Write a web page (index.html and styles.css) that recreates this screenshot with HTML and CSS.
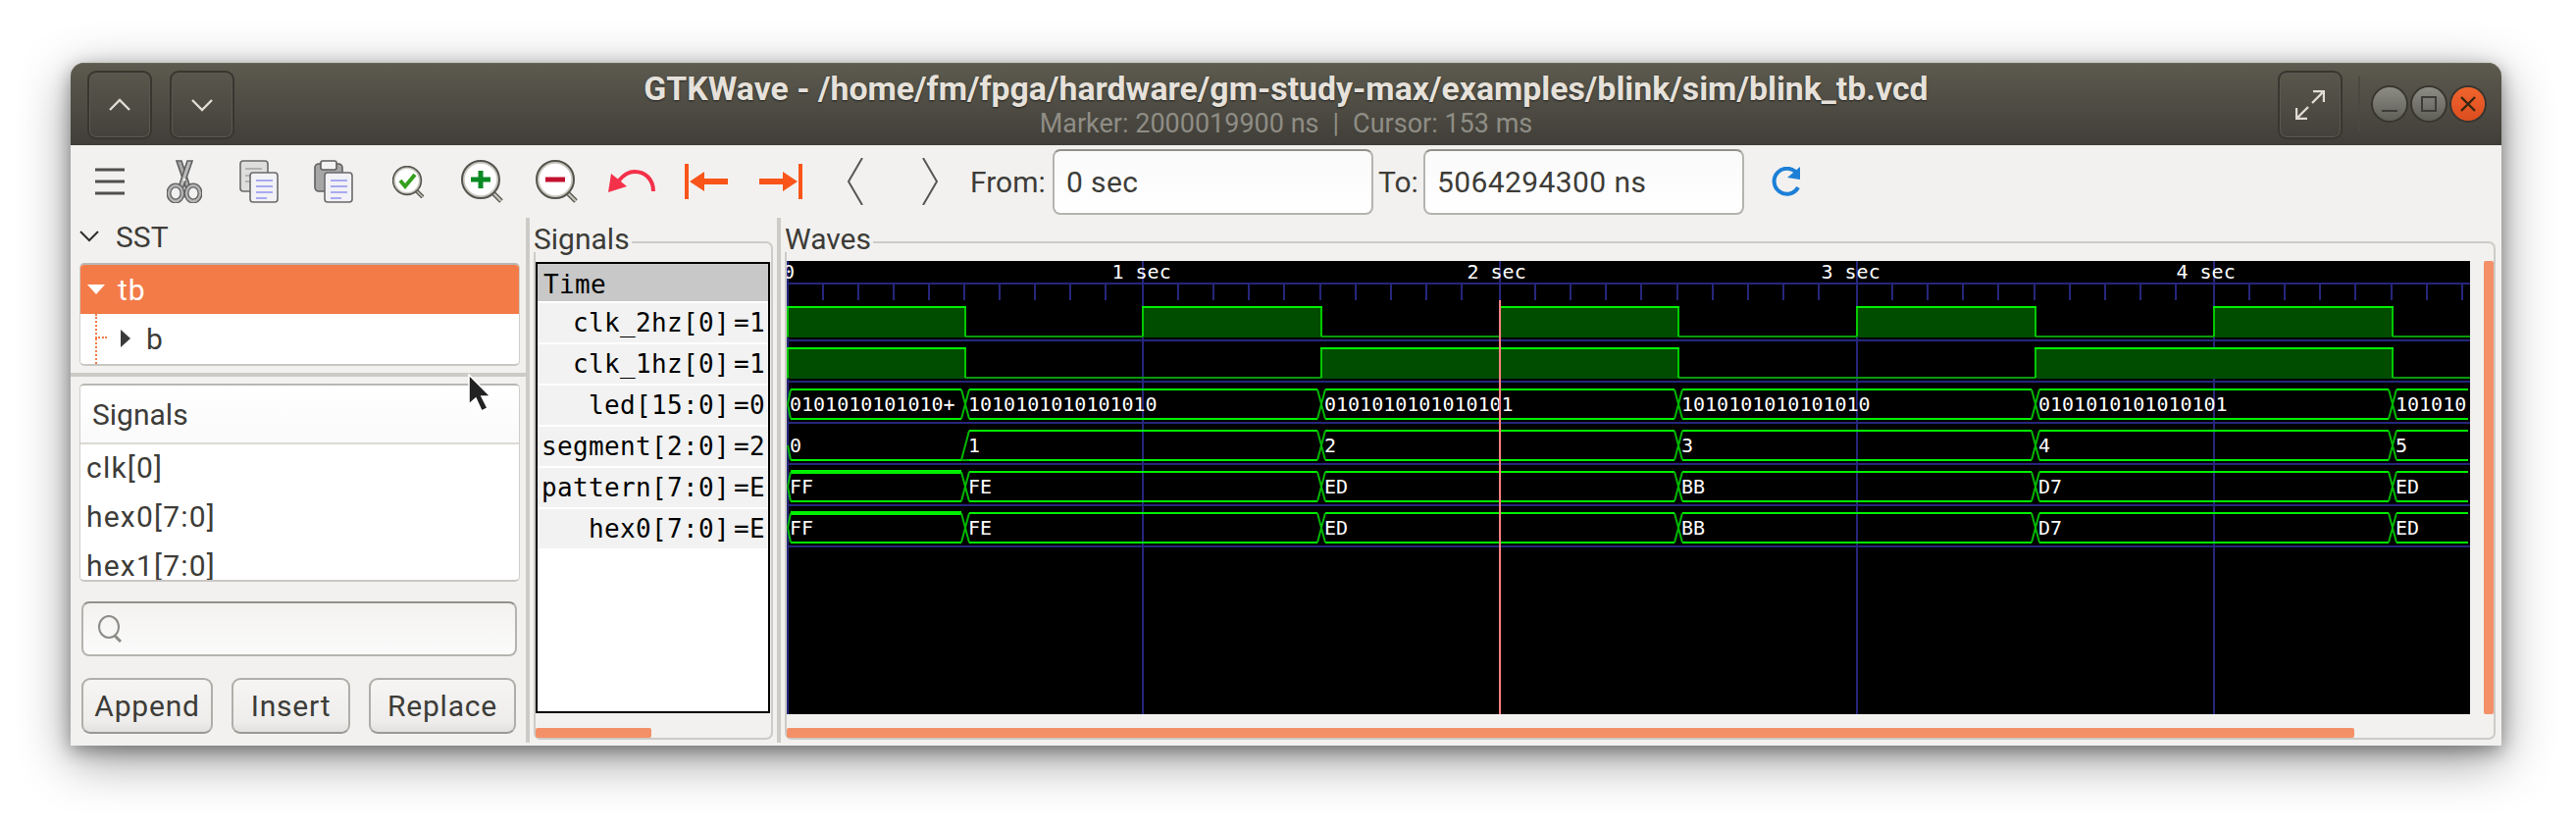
FILE: index.html
```html
<!DOCTYPE html>
<html lang="en">
<head>
  <meta charset="UTF-8" />
  <title>GTKWave</title>
  <link rel="stylesheet" href="styles.css">
</head>
<body>

  <div class="window">
    <header class="titlebar">
      <div class="title-left">
        <div class="hb-btn"><svg width="22" height="14" viewBox="0 0 22 14"><path d="M1 12 11 2 21 12"/></svg></div>
        <div class="hb-btn"><svg width="22" height="14" viewBox="0 0 22 14"><path d="M1 2 11 12 21 2"/></svg></div>
      </div>
      <div class="title-text">
        <div class="title-main">GTKWave - /home/fm/fpga/hardware/gm-study-max/examples/blink/sim/blink_tb.vcd</div>
        <div class="title-sub">Marker: 2000019900 ns<span class="sub-bar">|</span>Cursor: 153 ms</div>
      </div>
      <div class="title-right">
        <div class="hb-btn"><svg width="30" height="30" viewBox="0 0 30 30"><path d="M18 1H29V12M29 1 17 13M1 18V29H12M1 29 13 17"/></svg></div>
        <div class="hb-sep"></div>
        <div class="win-btn"><span class="win-min"></span></div>
        <div class="win-btn"><span class="win-max"></span></div>
        <div class="win-btn win-close"><svg width="18" height="18" viewBox="0 0 18 18"><path d="M2 2 16 16M16 2 2 16"/></svg></div>
      </div>
    </header>

    <div class="toolbar">
      <div class="tool"><svg width="30" height="28" viewBox="0 0 30 28"><path d="M0 2H30M0 14H30M0 26H30" fill="none" stroke="#4f4f4f" stroke-width="3"/></svg></div>
      <div class="tool">
        <svg width="36" height="44" viewBox="0 0 36 44">
          <path d="M10 1 15 1 24 28 20 30Z" fill="#a9a9a9" stroke="#5f5f5f" stroke-width="1.6"/>
          <path d="M26 1 21 1 12 28 16 30Z" fill="#bdbdbd" stroke="#5f5f5f" stroke-width="1.6"/>
          <ellipse cx="9" cy="34" rx="7" ry="8" fill="none" stroke="#5f5f5f" stroke-width="5"/>
          <ellipse cx="27" cy="34" rx="7" ry="8" fill="none" stroke="#5f5f5f" stroke-width="5"/>
          <ellipse cx="9" cy="34" rx="7" ry="8" fill="none" stroke="#b5b5b5" stroke-width="2.4"/>
          <ellipse cx="27" cy="34" rx="7" ry="8" fill="none" stroke="#b5b5b5" stroke-width="2.4"/>
          <circle cx="18" cy="20" r="1.6" fill="#eee"/>
        </svg>
      </div>
      <div class="tool">
        <svg width="40" height="44" viewBox="0 0 40 44">
          <rect x="1" y="1" width="28" height="31" rx="3" fill="#dededc" stroke="#6a6a6a" stroke-width="1.6"/>
          <path d="M6 9H23M6 16H12M6 22H12" stroke="#b2b2b0" stroke-width="2"/>
          <rect x="11" y="13" width="28" height="30" rx="3" fill="#f1f1f6" stroke="#6a6a6a" stroke-width="1.6"/>
          <path d="M17 21H34M17 27H34M17 33H34M17 39H28" stroke="#a9a9f0" stroke-width="2"/>
        </svg>
      </div>
      <div class="tool">
        <svg width="40" height="44" viewBox="0 0 40 44">
          <rect x="1" y="4" width="28" height="28" rx="4" fill="#a6a6a6" stroke="#5f5f5f" stroke-width="1.6"/>
          <rect x="7" y="1" width="16" height="9" rx="2" fill="#f3f3f3" stroke="#5f5f5f" stroke-width="1.6"/>
          <rect x="11" y="13" width="28" height="30" rx="3" fill="#f1f1f6" stroke="#6a6a6a" stroke-width="1.6"/>
          <path d="M17 21H34M17 27H34M17 33H34M17 39H28" stroke="#a9a9f0" stroke-width="2"/>
        </svg>
      </div>
      <div class="tool">
        <svg width="33" height="33" viewBox="0 0 33 33">
          <path d="M23 24 31 32" stroke="#55554f" stroke-width="4"/>
          <path d="M23 24 31 32" stroke="#c4c2b8" stroke-width="1.6"/>
          <circle cx="15" cy="15" r="13.5" fill="#fff" stroke="#c9c7be" stroke-width="3"/>
          <circle cx="15" cy="15" r="14.4" fill="none" stroke="#55554f" stroke-width="1.6"/>
          <path d="M8 15 13 21 23 9" fill="none" stroke="#35a01e" stroke-width="4"/>
        </svg>
      </div>
      <div class="tool">
        <svg width="44" height="44" viewBox="0 0 44 44">
          <path d="M31 32 41 42" stroke="#55554f" stroke-width="5"/>
          <path d="M31 32 41 42" stroke="#c4c2b8" stroke-width="2.4"/>
          <circle cx="20" cy="20" r="18" fill="#fff" stroke="#c9c7be" stroke-width="3.4"/>
          <circle cx="20" cy="20" r="19" fill="none" stroke="#55554f" stroke-width="2"/>
          <path d="M20 11V29M10 20H30" stroke="#098a24" stroke-width="5"/>
        </svg>
      </div>
      <div class="tool">
        <svg width="44" height="44" viewBox="0 0 44 44">
          <path d="M31 32 41 42" stroke="#55554f" stroke-width="5"/>
          <path d="M31 32 41 42" stroke="#c4c2b8" stroke-width="2.4"/>
          <circle cx="20" cy="20" r="18" fill="#fff" stroke="#c9c7be" stroke-width="3.4"/>
          <circle cx="20" cy="20" r="19" fill="none" stroke="#55554f" stroke-width="2"/>
          <path d="M10 20H30" stroke="#c2112f" stroke-width="5"/>
        </svg>
      </div>
      <div class="tool">
        <svg width="48" height="24" viewBox="0 0 48 24">
          <path d="M46 22C46 10 38 2 27 2 20 2 15 6 11 11" fill="none" stroke="#f5304a" stroke-width="4"/>
          <path d="M0 23 3 4 19 17Z" fill="#f5304a"/>
        </svg>
      </div>
      <div class="tool">
        <svg width="44" height="36" viewBox="0 0 44 36">
          <path d="M2 0V36" stroke="#f9541a" stroke-width="4"/>
          <path d="M5 18 20 8V15H44V21H20V28Z" fill="#f9541a"/>
        </svg>
      </div>
      <div class="tool">
        <svg width="44" height="36" viewBox="0 0 44 36">
          <path d="M42 0V36" stroke="#f9541a" stroke-width="4"/>
          <path d="M39 18 24 8V15H0V21H24V28Z" fill="#f9541a"/>
        </svg>
      </div>
      <div class="tool"><svg width="18" height="48" viewBox="0 0 18 48"><path d="M16 0 2 24 16 48" fill="none" stroke="#565654" stroke-width="2"/></svg></div>
      <div class="tool"><svg width="18" height="48" viewBox="0 0 18 48"><path d="M2 0 16 24 2 48" fill="none" stroke="#565654" stroke-width="2"/></svg></div>
      <span class="tb-label tb-from">From:</span>
      <div class="entry entry-time">0 sec</div>
      <span class="tb-label tb-to">To:</span>
      <div class="entry entry-time">5064294300 ns</div>
      <div class="tool tool-reload">
        <svg width="32" height="30" viewBox="0 0 32 30">
          <path d="M28 7A13 13 0 1 0 29 21" fill="none" stroke="#1d7fd6" stroke-width="4"/>
          <path d="M31 0 31 13 18 11Z" fill="#1d7fd6"/>
        </svg>
      </div>
    </div>

    <div class="main">
      <aside class="left-pane">
        <section class="sst">
          <div class="expander">
            <svg width="20" height="12" viewBox="0 0 20 12"><path d="M1 1 10 10 19 1" fill="none" stroke="#2e2e2e" stroke-width="2"/></svg>
            <span>SST</span>
          </div>
          <div class="list-frame tree">
            <div class="tree-row tree-selected">
              <i class="arrow-down"></i><span>tb</span>
            </div>
            <div class="tree-row tree-child">
              <i class="tree-dots"></i><i class="arrow-right"></i><span>b</span>
            </div>
          </div>
        </section>
        <div class="handle-h"></div>
        <section class="sig-search">
          <div class="list-frame sig-list">
            <div class="sig-head">Signals</div>
            <div class="sig-item">clk[0]</div>
            <div class="sig-item">hex0[7:0]</div>
            <div class="sig-item">hex1[7:0]</div>
          </div>
          <div class="search">
            <svg width="28" height="28" viewBox="0 0 28 28"><ellipse cx="12" cy="12" rx="10" ry="11" fill="none" stroke="#8c8c88" stroke-width="2"/><path d="M18 21 24 27" stroke="#8c8c88" stroke-width="3"/></svg>
          </div>
          <div class="actions">
            <button class="btn btn-append">Append</button>
            <button class="btn btn-insert">Insert</button>
            <button class="btn btn-replace">Replace</button>
          </div>
        </section>
      </aside>

      <div class="handle-v"></div>

      <section class="signals-pane">
        <div class="frame">
          <div class="frame-label">Signals</div>
          <div class="name-box">
            <div class="name-time">Time</div>
            <div class="name-row"><span>clk_2hz[0]</span><b>=1</b></div>
            <div class="name-row"><span>clk_1hz[0]</span><b>=1</b></div>
            <div class="name-row"><span>led[15:0]</span><b>=0</b></div>
            <div class="name-row"><span>segment[2:0]</span><b>=2</b></div>
            <div class="name-row"><span>pattern[7:0]</span><b>=E</b></div>
            <div class="name-row"><span>hex0[7:0]</span><b>=E</b></div>
          </div>
          <div class="scroll-h scroll-names"></div>
        </div>
      </section>

      <div class="handle-v"></div>

      <section class="waves-pane">
        <div class="frame frame-waves">
          <div class="frame-label">Waves</div>
          <svg id="waves" class="wave-canvas" viewBox="802 266 1716 462" width="1716" height="462"></svg>
          <div class="scroll-v"></div>
          <div class="scroll-h scroll-waves"></div>
        </div>
      </section>
    </div>

    <svg class="pointer" width="26" height="40" viewBox="0 0 26 40">
      <path d="M2 1V31L9 25 15 38 21 35 15 23H24Z" fill="#222" stroke="#fff" stroke-width="1.6"/>
    </svg>
  </div>

  <script src="script.js"></script>
</body>
</html>
```

FILE: styles.css
```css
* {
  box-sizing: border-box;
}

body {
  margin: 0;
  width: 2626px;
  height: 844px;
  background: #fff;
  overflow: hidden;
  font-family: Roboto, "Noto Sans", sans-serif;
  color: #3d3c38;
}

.window {
  position: absolute;
  left: 72px;
  top: 64px;
  width: 2478px;
  height: 696px;
  background: #f2f1ef;
  border-radius: 14px 14px 0 0;
  box-shadow: 0 14px 52px rgba(0, 0, 0, .42), 0 5px 18px rgba(0, 0, 0, .34);
  display: flex;
  flex-direction: column;
}

/* title bar */
.titlebar {
  height: 84px;
  flex: none;
  display: grid;
  grid-template-columns: 1fr auto 1fr;
  align-items: center;
  border-radius: 14px 14px 0 0;
  background: linear-gradient(#5d5b4f, #403e38);
  box-shadow: inset 0 1px 0 #6a6859;
}

.title-left {
  display: flex;
  gap: 18px;
  padding-left: 17px;
}

.title-right {
  display: flex;
  align-items: center;
  justify-content: flex-end;
  padding-right: 14px;
}

.hb-btn {
  width: 66px;
  height: 70px;
  margin-top: 2px;
  border: 2px solid #38362f;
  border-radius: 9px;
  box-shadow: inset 0 0 0 1px #5a584f;
  display: flex;
  align-items: center;
  justify-content: center;
}

.hb-btn path {
  fill: none;
  stroke: #e0dcd4;
  stroke-width: 2.4;
}

.hb-sep {
  width: 2px;
  height: 56px;
  margin: 0 10px 0 16px;
  background: #4a4840;
}

.win-btn {
  width: 34px;
  height: 34px;
  margin: 0 3px;
  border-radius: 50%;
  background: linear-gradient(#8c8b84, #5f5e57);
  box-shadow: 0 0 0 2px #38362f;
  display: flex;
  align-items: center;
  justify-content: center;
}

.win-close {
  background: linear-gradient(#f0642c, #dd4d1f);
}

.win-close path {
  fill: none;
  stroke: #33260f;
  stroke-width: 2.4;
}

.win-min {
  width: 16px;
  height: 2px;
  margin-top: 14px;
  background: #3d3c36;
}

.win-max {
  width: 16px;
  height: 16px;
  border: 2px solid #3d3c36;
}

.title-text {
  text-align: center;
  white-space: nowrap;
}

.title-main {
  font-size: 33.8px;
  line-height: 38px;
  font-weight: 700;
  color: #e6e1da;
  text-shadow: 0 1px 2px #222;
}

.title-sub {
  font-size: 27px;
  line-height: 30px;
  margin-top: 1px;
  color: #8f8d85;
}

.sub-bar {
  margin: 0 14px;
}

/* toolbar */
.toolbar {
  height: 74px;
  flex: none;
  padding-left: 2px;
  display: flex;
  align-items: center;
}

.tool {
  width: 76px;
  flex: none;
  display: flex;
  justify-content: center;
  align-items: center;
}

.tb-label {
  font-size: 30px;
}

.tb-from {
  margin-left: 3px;
  width: 84px;
}

.tb-to {
  width: 46px;
  margin-left: 5px;
}

.entry {
  height: 67px;
  padding: 0 12px;
  border: 2px solid #b5b3af;
  border-top-color: #93918d;
  border-radius: 8px;
  background: linear-gradient(#fafafa, #fff);
  font-size: 30px;
  letter-spacing: .4px;
  display: flex;
  align-items: center;
}

.entry-time {
  width: 327px;
}

.tool-reload {
  margin-left: 4px;
}

/* panes */
.main {
  flex: 1;
  display: flex;
  min-height: 0;
}

.left-pane {
  width: 464px;
  flex: none;
  display: flex;
  flex-direction: column;
}

.sst {
  height: 158px;
  padding: 0 6px 0 9px;
}

.expander {
  height: 38px;
  margin-bottom: 8px;
  display: flex;
  align-items: center;
  gap: 17px;
  font-size: 30px;
}

.list-frame {
  background: #fff;
  border: 1px solid #cfcdc9;
  border-top: 2px solid #b9b7b3;
  border-bottom: 2px solid #c9c7c3;
  border-radius: 5px;
  overflow: hidden;
}

.tree {
  height: 105px;
}

.tree-row {
  height: 50px;
  display: flex;
  align-items: center;
  font-size: 30px;
  position: relative;
}

.tree-selected {
  background: #f37b48;
  color: #fff;
  padding-left: 7px;
}

.tree-selected span {
  margin-left: 13px;
  letter-spacing: 1px;
}

.arrow-down {
  border: 9px solid transparent;
  border-top: 10px solid #fff;
  border-bottom: 0;
}

.tree-child {
  padding-left: 41px;
  padding-bottom: 3px;
  height: 53px;
}

.tree-child span {
  margin-left: 16px;
}

.arrow-right {
  border: 9px solid transparent;
  border-left: 10px solid #3a3a3a;
  border-right: 0;
}

.tree-dots {
  position: absolute;
  left: 15px;
  top: 0;
  width: 12px;
  height: 25px;
  border-left: 2px dotted #f37b48;
  border-bottom: 2px dotted #f37b48;
}

.tree-dots::after {
  content: "";
  position: absolute;
  left: -2px;
  top: 25px;
  height: 26px;
  border-left: 2px dotted #f37b48;
}

.handle-h {
  height: 4px;
  flex: none;
  background: #cdcbc7;
}

.sig-search {
  flex: 1;
  padding: 7px 6px 0 9px;
}

.sig-list {
  height: 202px;
}

.sig-head {
  height: 60px;
  padding-left: 12px;
  display: flex;
  align-items: center;
  font-size: 30px;
  background: linear-gradient(#fff, #fafafa);
  border-bottom: 2px solid #dbd9d5;
}

.sig-item {
  height: 50px;
  padding: 0 0 3px 6px;
  display: flex;
  align-items: center;
  font-size: 30px;
  letter-spacing: 1.2px;
}

.search {
  height: 56px;
  margin: 20px 3px 0 2px;
  padding-left: 14px;
  border: 2px solid #b5b3af;
  border-top-color: #93918d;
  border-radius: 8px;
  background: linear-gradient(#f3f2f0, #fbfbfb);
  display: flex;
  align-items: center;
}

.actions {
  display: flex;
  gap: 19px;
  margin: 22px 3px 0 2px;
}

.btn {
  height: 57px;
  padding: 0;
  font: inherit;
  font-size: 30px;
  letter-spacing: .8px;
  color: #3d3c38;
  border: 2px solid #b0aeaa;
  border-bottom-color: #9a9894;
  border-radius: 9px;
  background: linear-gradient(#f6f5f3, #eeedeb 80%, #e2e1df);
}

.btn-append {
  width: 134px;
}

.btn-insert {
  width: 121px;
}

.btn-replace {
  width: 150px;
}

.handle-v {
  width: 4px;
  flex: none;
  margin-bottom: 3px;
  background: #cdcbc7;
}

.signals-pane {
  width: 252px;
  flex: none;
  padding: 24px 4px 6px;
}

.waves-pane {
  flex: 1;
  min-width: 0;
  padding: 24px 6px 6px 4px;
}

.frame {
  position: relative;
  height: 100%;
  padding-top: 19px;
  border: 2px solid #cdcbc7;
  border-radius: 7px;
}

.frame-label {
  position: absolute;
  left: -2px;
  top: -18px;
  height: 27px;
  padding-right: 2px;
  font-size: 30px;
  line-height: 28px;
  background: #f2f1ef;
}

.name-box {
  width: 239px;
  height: 460px;
  border: 2px solid #000;
  background: #fff;
  font-family: "DejaVu Sans Mono", monospace;
  font-size: 26px;
  letter-spacing: .35px;
  color: #000;
  overflow: hidden;
}

.name-time {
  height: 38px;
  padding-left: 6px;
  line-height: 43px;
  background: #c8c8c8;
}

.name-row {
  height: 40px;
  margin-top: 2px;
  display: flex;
  align-items: center;
  white-space: nowrap;
  background: #f2f2f2;
}

.name-row span {
  flex: 1;
  text-align: right;
  padding-right: 4px;
}

.name-row b {
  width: 35px;
  flex: none;
  font-weight: 400;
  overflow: hidden;
}

.scroll-h {
  height: 10px;
  margin-top: 15px;
  background: #f49068;
  border-radius: 2px;
}

.scroll-names {
  width: 118px;
}

.frame-waves {
  display: grid;
  grid-template-columns: 1716px 10px;
  grid-template-rows: 462px 10px;
  column-gap: 14px;
  row-gap: 14px;
  padding-top: 18px;
}

.wave-canvas {
  display: block;
  background: #000;
}

.scroll-v {
  background: #f49068;
  border-radius: 2px;
}

.scroll-waves {
  width: 1598px;
  margin-top: 0;
}

.wave-text {
  fill: #fff;
  font-family: "DejaVu Sans Mono", monospace;
  font-size: 20px;
}

.pointer {
  position: absolute;
  left: 404px;
  top: 317px;
}
```

FILE: script.js
```js
const svg = document.getElementById("waves");

const NAVY = "#26267c";
const TOP = 802, END = 2518;
const edges = [803, 984, 1165, 1347, 1529, 1711, 1893, 2075, 2257, 2439];
const majors = [803, 1165, 1529, 1893, 2257];

let out = '<defs><clipPath id="busclip"><rect x="802" y="266" width="1714" height="462"/></clipPath></defs>';

function line(d, color, w) {
  return `<path d="${d}" fill="none" stroke="${color}" stroke-width="${w}"/>`;
}

function text(x, y, s) {
  return `<text class="wave-text" x="${x}" y="${y}">${s}</text>`;
}

// time ruler
out += line(`M${TOP} 289H${END}`, NAVY, 2);
let ticks = "";
edges.forEach((e, k) => {
  const base = k % 2 ? e - 1 : e;
  for (let j = 0; j < 5; j++) {
    ticks += `M${base + 36 * j} 290V306`;
  }
});
out += line(ticks, NAVY, 2);
out += line(majors.map(x => `M${x} 266V728`).join(""), NAVY, 2);
out += text(798, 284, "0");
[[1133.5, 1], [1495.5, 2], [1856.5, 3], [2218.5, 4]].forEach(([x, n]) => {
  out += text(x, 284, n + " sec");
});

// row separators
[347, 389, 431, 473, 515, 557].forEach(y => {
  out += line(`M${TOP} ${y}H${END}`, NAVY, 2);
});

// clock rows: list of [from, to] where the signal is high
function clock(hi, lo, highs) {
  let low = `M${TOP} ${lo}H${END}`;
  out += line(low, "#0a9a0a", 2);
  highs.forEach(([a, b]) => {
    out += `<rect x="${a}" y="${hi}" width="${b - a}" height="${lo - hi + 1}" fill="#004d00"/>`;
    out += line(`M${a} ${lo}V${hi}`, "#00c800", 2);
    out += line(`M${b} ${hi}V${lo}`, "#00c800", 2);
    out += line(`M${a - 1} ${hi}H${b + 1}`, "#00f000", 2);
  });
}

clock(313, 343, [[803, 984], [1165, 1347], [1529, 1711], [1893, 2075], [2257, 2439]]);
clock(355, 385, [[803, 984], [1347, 1711], [2075, 2439]]);

// bus rows
const busEdges = [984, 1347, 1711, 2075, 2439];

function bus(top, values, opts = {}) {
  const bot = top + 30;
  const starts = [806, ...busEdges.map(e => e + 4)];
  const stops = [...busEdges.map(e => e - 4), 2516];
  values.forEach((v, i) => {
    if (!(i === 0 && opts.lowFirst)) {
      out += line(`M${starts[i]} ${top}H${stops[i]}`, "#00f000", i === 0 && opts.thickFirst ? 4 : 2);
    }
    out += line(`M${starts[i]} ${bot}H${stops[i]}`, "#00f000", 2);
    out += `<g clip-path="url(#busclip)">${text(starts[i] - 1, top + 22, v)}</g>`;
  });
  let cross = `M803 ${top + 15}L806 ${top}M803 ${top + 15}L806 ${bot}`;
  if (opts.lowFirst) {
    cross = `M803 ${top + 15}L806 ${bot}`;
  }
  busEdges.forEach((e, i) => {
    cross += `M${e - 4} ${bot}L${e + 4} ${top}`;
    if (!(i === 0 && opts.lowFirst)) {
      cross += `M${e - 4} ${top}L${e + 4} ${bot}`;
    } else {
      cross += `M${e - 4} ${bot}H${e + 4}`;
    }
  });
  out += line(cross, "#00b800", 2);
}

const ones = "1010101010101010", zeros = "0101010101010101";
bus(397, ["0101010101010+", ones, zeros, ones, zeros, ones]);
bus(439, ["0", "1", "2", "3", "4", "5"], { lowFirst: true });
bus(481, ["FF", "FE", "ED", "BB", "D7", "ED"], { thickFirst: true });
bus(523, ["FF", "FE", "ED", "BB", "D7", "ED"], { thickFirst: true });

// marker
out += line("M1529 306V728", "#ff8080", 2);

svg.innerHTML = out;
```
